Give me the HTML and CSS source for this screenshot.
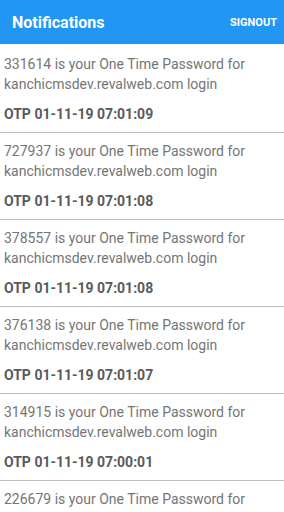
FILE: index.html
```html
<!doctype html>
<html lang="en">
  <head>
    <meta charset="UTF-8" />
    <meta name="viewport" content="width=device-width, initial-scale=1.0" />
    <title>Notifications</title>
    <link rel="stylesheet" href="styles.css">
  </head>
  <body>
    <div class="app">
      <div class="toolbar">
        <h1 class="toolbar-title">Notifications</h1>
        <span class="toolbar-action">SIGNOUT</span>
      </div>
      <div class="list">
        <div class="item">
          <p class="message">331614 is your One Time Password for kanchicmsdev.revalweb.com login</p>
          <h2 class="otp">OTP 01-11-19 07:01:09</h2>
        </div>
        <div class="item">
          <p class="message">727937 is your One Time Password for kanchicmsdev.revalweb.com login</p>
          <h2 class="otp">OTP 01-11-19 07:01:08</h2>
        </div>
        <div class="item">
          <p class="message">378557 is your One Time Password for kanchicmsdev.revalweb.com login</p>
          <h2 class="otp">OTP 01-11-19 07:01:08</h2>
        </div>
        <div class="item">
          <p class="message">376138 is your One Time Password for kanchicmsdev.revalweb.com login</p>
          <h2 class="otp">OTP 01-11-19 07:01:07</h2>
        </div>
        <div class="item">
          <p class="message">314915 is your One Time Password for kanchicmsdev.revalweb.com login</p>
          <h2 class="otp">OTP 01-11-19 07:00:01</h2>
        </div>
        <div class="item">
          <p class="message">226679 is your One Time Password for kanchicmsdev.revalweb.com login</p>
          <h2 class="otp">OTP 01-11-19 07:00:00</h2>
        </div>
      </div>
    </div>
  </body>
</html>
```

FILE: styles.css
```css
* {
  box-sizing: border-box;
  padding: 0;
  margin: 0;
}

html,
body {
  height: 100%;
  overflow: hidden;
}

body {
  font-family: Roboto, "Noto Sans", sans-serif;
  background: #fff;
}

.toolbar {
  display: flex;
  align-items: center;
  justify-content: space-between;
  height: 44px;
  padding: 0 7px 0 12px;
  background: #2196f3;
  color: #fff;
}

.toolbar-title {
  font-size: 16px;
  font-weight: 700;
}

.toolbar-action {
  font-size: 11px;
  font-weight: 700;
}

.item {
  padding: 10px 4px 9px;
  border-bottom: 1px solid #bdbdbd;
}

.item + .item {
  padding-top: 8px;
}

.message {
  font-size: 14px;
  line-height: 20px;
  color: #757575;
}

.otp {
  margin-top: 11px;
  font-size: 14px;
  line-height: 18px;
  font-weight: 700;
  color: #5a5a5a;
}
```
